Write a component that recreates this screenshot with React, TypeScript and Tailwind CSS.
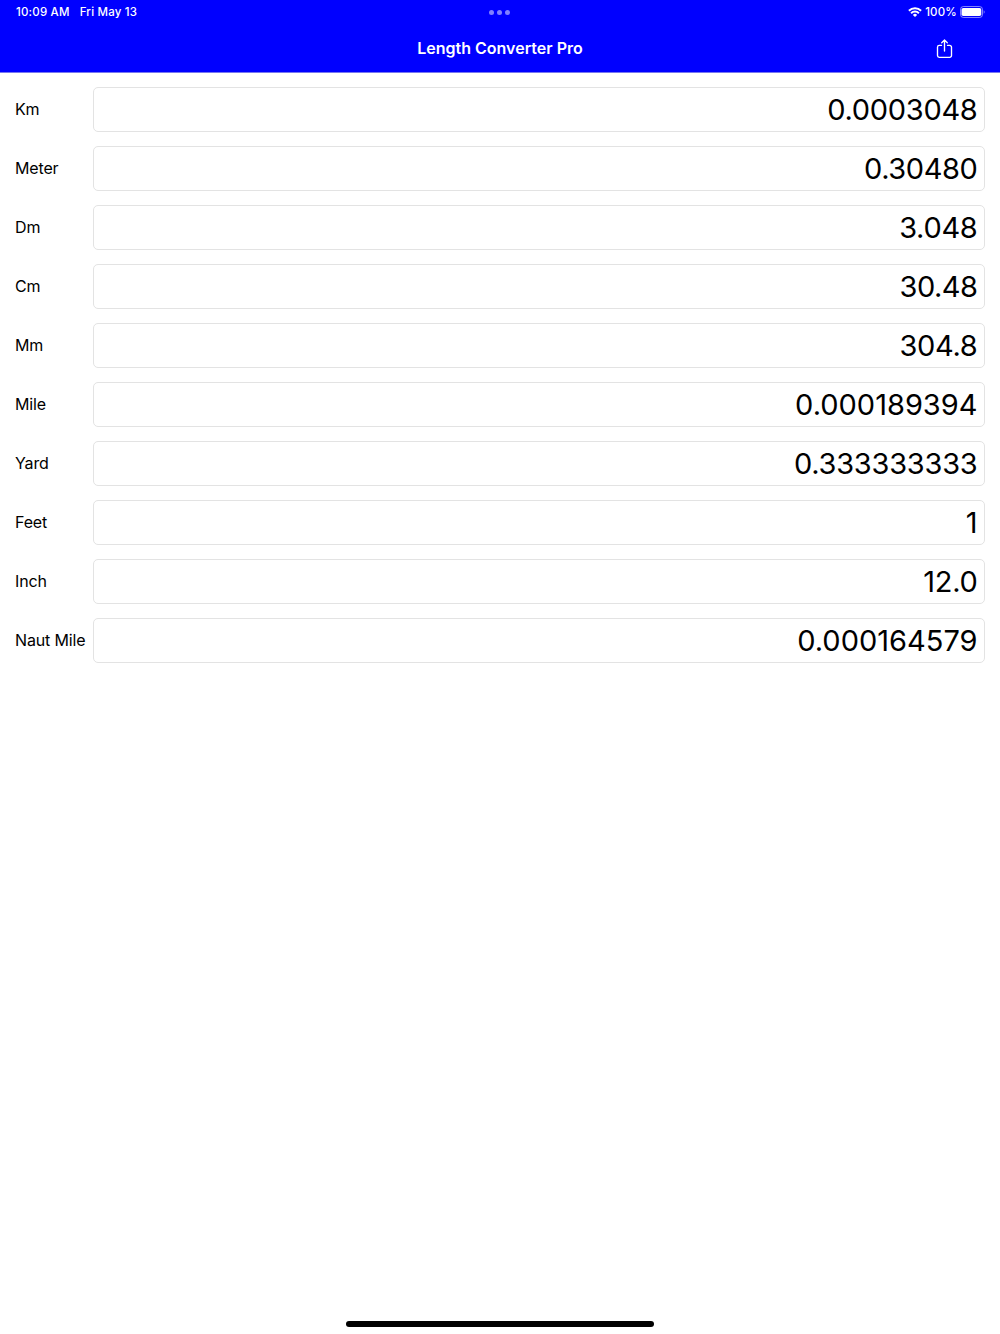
const rows = [
  { label: "Km", value: "0.0003048", tracking: "tracking-[-0.3px]" },
  { label: "Meter", value: "0.30480", tracking: "tracking-[-0.4px]" },
  { label: "Dm", value: "3.048", tracking: "tracking-[-0.3px]" },
  { label: "Cm", value: "30.48", tracking: "tracking-[-0.5px]" },
  { label: "Mm", value: "304.8", tracking: "tracking-[-0.3px]" },
  { label: "Mile", value: "0.000189394", tracking: "tracking-normal" },
  { label: "Yard", value: "0.333333333", tracking: "tracking-[-0.25px]" },
  { label: "Feet", value: "1", tracking: "tracking-normal" },
  { label: "Inch", value: "12.0", tracking: "tracking-[-0.3px]" },
  { label: "Naut Mile", value: "0.000164579", tracking: "tracking-normal" },
];

function StatusBar() {
  return (
    <div className="grid h-6 grid-cols-3 items-center px-4 text-[11.5px] font-medium tracking-[0.2px]">
      <div className="flex gap-[10px] pt-[2px]">
        <span>10:09 AM</span>
        <span>Fri May 13</span>
      </div>
      <div className="flex justify-center gap-[3px]">
        <span className="size-[5px] rounded-full bg-[#8080ff]" />
        <span className="size-[5px] rounded-full bg-[#8080ff]" />
        <span className="size-[5px] rounded-full bg-[#8080ff]" />
      </div>
      <div className="-mr-px flex items-center justify-end gap-[3px]">
        <svg width="14" height="10" viewBox="0 0 14 10" fill="none" stroke="white" strokeWidth="2">
          <path d="M0.9 3.7a8.7 8.7 0 0 1 12.2 0" />
          <path d="M3.1 6.2a5.6 5.6 0 0 1 7.8 0" />
          <path d="M7 10L4.9 7.9a3 3 0 0 1 4.2 0z" fill="white" stroke="none" />
        </svg>
        <span className="pt-[2px]">100%</span>
        <svg width="25" height="12" viewBox="0 0 25 12">
          <rect x="0.5" y="0.5" width="22" height="11" rx="3" fill="none" stroke="white" strokeOpacity="0.5" />
          <rect x="1.5" y="2" width="19.8" height="8" rx="1.8" fill="white" />
          <path d="M23.7 4.2v3.6q1-.5 1-1.8t-1-1.8" fill="white" fillOpacity="0.5" />
        </svg>
      </div>
    </div>
  );
}

export default function App() {
  return (
    <div className="flex h-[1334px] w-[1000px] flex-col bg-white font-['Inter',sans-serif] text-black">
      <header className="h-[73px] border-b border-[#7878f0] bg-[#0000ff] text-white">
        <StatusBar />
        <div className="grid h-12 grid-cols-3 items-center">
          <h1 className="col-start-2 text-center text-base font-semibold">Length Converter Pro</h1>
          <button className="mt-[2px] mr-[47px] justify-self-end">
            <svg
              width="17"
              height="20"
              viewBox="0 0 17 20"
              fill="none"
              stroke="white"
              strokeWidth="1.35"
              strokeLinecap="round"
              strokeLinejoin="round"
            >
              <path d="M5.5 6.4H3.3a1.8 1.8 0 0 0-1.8 1.8v8.3a1.8 1.8 0 0 0 1.8 1.8h10.4a1.8 1.8 0 0 0 1.8-1.8V8.2a1.8 1.8 0 0 0-1.8-1.8h-2.2" />
              <path d="M8.5 12V1M5.7 3.7L8.5 1l2.8 2.7" />
            </svg>
          </button>
        </div>
      </header>
      <main className="flex flex-1 flex-col gap-[14.05px] px-[15px] pt-[14px]">
        {rows.map((row) => (
          <label key={row.label} className="flex h-[45px] items-center">
            <span className="w-[78px] pb-px text-base tracking-[-0.15px] whitespace-nowrap">
              {row.label}
            </span>
            <span
              className={`flex h-full flex-1 items-center justify-end rounded-[5px] border border-[#e3e3e3] pr-[6.5px] text-[29px] ${row.tracking}`}
            >
              {row.value}
            </span>
          </label>
        ))}
      </main>
      <div className="mb-[7px] h-[6px] w-[308px] self-center rounded-full bg-black" />
    </div>
  );
}
